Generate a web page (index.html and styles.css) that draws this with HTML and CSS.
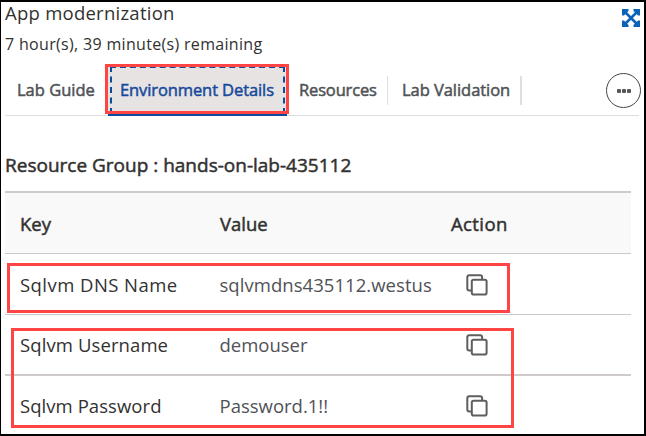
FILE: index.html
```
<!DOCTYPE html>
<html lang="en">
<head>
<meta charset="utf-8">
<title>App modernization</title>
<link rel="stylesheet" href="styles.css">
</head>
<body>
<svg class="defs" aria-hidden="true">
  <symbol id="copy" viewBox="0 0 22 22">
    <path d="M5 16.4H3.2Q1.3 16.4 1.3 14.5V3.2Q1.3 1.3 3.2 1.3H14.2Q16.1 1.3 16.1 3.2V5"/>
    <rect x="5.8" y="5.8" width="14.8" height="14.8" rx="1.8"/>
  </symbol>
</svg>
<main class="panel">
  <header class="top">
    <div>
      <h1 class="title">App modernization</h1>
      <p class="remaining">7 hour(s), 39 minute(s) remaining</p>
    </div>
    <svg class="expand" viewBox="0 0 18 18">
      <path d="M3 3L15 15M15 3L3 15" stroke="#0b63b8" stroke-width="2.6"/>
      <path d="M0 0H6.5V2L2 6.5H0ZM18 0V6.5H16L11.5 2V0ZM0 18V11.5H2L6.5 16V18ZM18 18H11.5V16L16 11.5H18Z" fill="#0b63b8"/>
    </svg>
  </header>
  <nav class="tabs">
    <a class="tab guide">Lab Guide</a>
    <a class="tab active">Environment Details</a>
    <a class="tab resources">Resources</a>
    <a class="tab validation">Lab Validation</a>
    <span class="more"><i></i><i></i><i></i></span>
  </nav>
  <h2 class="group">Resource Group : hands-on-lab-435112</h2>
  <section class="table">
    <div class="row head"><span>Key</span><span class="value">Value</span><span class="action">Action</span></div>
    <div class="row dns"><span class="name">Sqlvm DNS Name</span><span class="val">sqlvmdns435112.westus</span><svg class="copy"><use href="#copy"/></svg></div>
    <div class="row user"><span class="name">Sqlvm Username</span><span class="val">demouser</span><svg class="copy"><use href="#copy"/></svg></div>
    <div class="row pass"><span class="name">Sqlvm Password</span><span class="val">Password.1!!</span><svg class="copy"><use href="#copy"/></svg></div>
  </section>
  <div class="mark mark-tab"></div>
  <div class="mark mark-dns"></div>
  <div class="mark mark-login"></div>
</main>
</body>
</html>
```
FILE: styles.css
```
* { box-sizing: border-box; }
body { margin: 0; background: #fff; font-family: "Open Sans", "Noto Sans", sans-serif; color: #323130; }
.defs { position: absolute; width: 0; height: 0; }
.panel { position: relative; width: 646px; height: 436px; overflow: hidden; border: solid #000; border-width: 2px 2px 2px 1px; padding-left: 4px; }
.panel span, .tab, .group { white-space: nowrap; }
.top { display: flex; justify-content: space-between; height: 62px; padding-right: 4px; }
.title { margin: 0; height: 24px; line-height: 22px; font-size: 18.5px; letter-spacing: 0.25px; font-weight: 400; }
.remaining { margin: 0; height: 34px; line-height: 36px; font-size: 16px; letter-spacing: 0.32px; }
.expand { width: 18px; height: 18px; margin-top: 7px; }
.tabs { display: flex; width: 634px; height: 52px; border-bottom: 1px solid #dcdddf; font-size: 16.5px; -webkit-text-stroke: 0.5px; color: #505255; }
.tab { height: 52px; line-height: 52px; flex: none; }
.guide { width: 103px; padding-left: 12px; }
.active { width: 179px; height: 52px; padding-left: 12px; line-height: 52px; letter-spacing: -0.1px; color: #174a9c; background: #e7e3e2; border-bottom: 2px solid #0c4c9c; outline: 2px dashed #0c4c9c; outline-offset: -4px; }
.resources { width: 101px; height: 29px; margin-top: 12px; line-height: 28px; padding-left: 12px; letter-spacing: -0.15px; border-right: 1px solid #dcdfe4; }
.validation { width: 134px; height: 29px; margin-top: 12px; line-height: 28px; padding-left: 14px; letter-spacing: -0.05px; border-right: 2px solid #dce0e5; }
.more { display: flex; align-items: center; justify-content: center; gap: 1px; width: 35px; height: 35px; margin: 9px -2px 0 auto; border: 1px solid #42464e; border-radius: 50%; }
.more i { width: 4px; height: 4px; border-radius: 1px; background: #585858; }
.group { height: 75px; margin: 0; padding-top: 37px; line-height: 24px; font-size: 19px; font-weight: 400; -webkit-text-stroke: 0.5px; }
.table { width: 626px; border-top: 2px solid #cfcbcb; font-size: 18.5px; }
.row { display: grid; grid-template-columns: 200px 241px 1fr; align-items: center; padding-left: 15px; height: 61px; border-bottom: 1px solid #cac8c8; }
.head { background: #f9f9f9; -webkit-text-stroke: 0.5px; }
.action { margin-left: -10px; letter-spacing: 0.4px; }
.val { color: #505257; margin-left: -0.5px; }
.dns .name { letter-spacing: 0.45px; }
.dns .val { letter-spacing: 0.05px; }
.dns .copy { position: relative; top: 1px; }
.user .name { letter-spacing: 0.1px; }
.user { border-bottom: 2px solid #cfcbcb; }
.pass { border: 0; padding-bottom: 2px; }
.pass .name { letter-spacing: 0.06px; }
.copy { width: 22px; height: 22px; margin-left: 5px; fill: none; stroke: #605f5e; stroke-width: 2; }
.mark { position: absolute; border: 3px solid #ff4444; }
.mark-tab { left: 104px; top: 62px; width: 184px; height: 50px; }
.mark-dns { left: 6px; top: 261px; width: 503px; height: 50px; }
.mark-login { left: 10px; top: 326px; width: 503px; height: 100px; }
```
